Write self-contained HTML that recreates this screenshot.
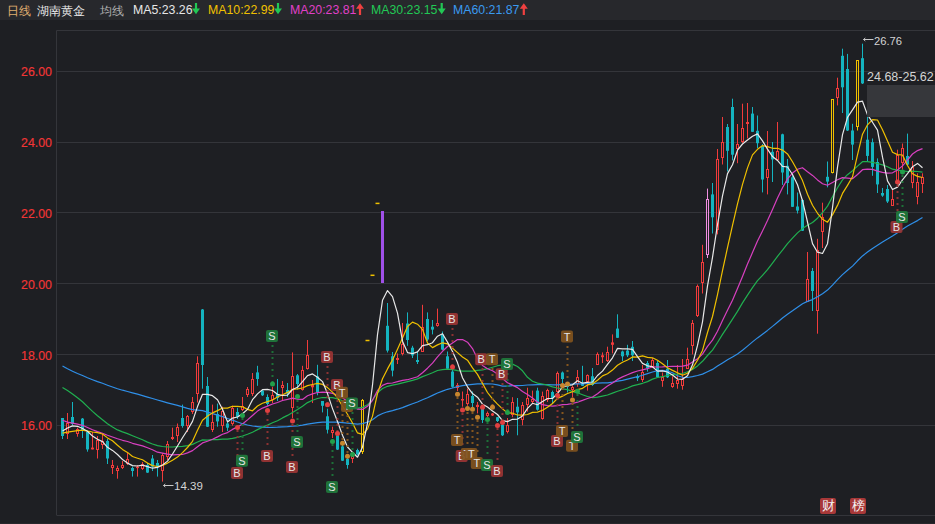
<!DOCTYPE html>
<html><head><meta charset="utf-8">
<style>
html,body{margin:0;padding:0;background:#1e1f23;width:935px;height:524px;overflow:hidden;font-family:"Liberation Sans",sans-serif;}
#hdr{position:absolute;left:0;top:0;width:935px;height:20px;background:#27282c;}
#hdr span{position:absolute;top:3px;font-size:13px;white-space:nowrap;line-height:14px;}
#hdr .sx{transform:scaleX(0.947);transform-origin:0 0;}
svg{position:absolute;left:0;top:0;}
.ax{position:absolute;left:0;width:52px;text-align:right;color:#f23636;font-size:13px;line-height:14px;transform:scaleX(0.95);transform-origin:100% 0;-webkit-text-stroke:0.15px #f23636;}
.lbl{position:absolute;color:#d4d4d4;font-size:12px;line-height:12px;white-space:nowrap;}
.badge{position:absolute;top:498px;width:16px;height:16px;background:#a83838;border-radius:2px;color:#f4f4f4;font-size:13px;line-height:16px;text-align:center;}
</style></head><body>
<div id="hdr">
<span style="left:6.5px;top:3.5px;font-size:12px;color:#e0b070">日线</span>
<span style="left:37px;top:3.5px;font-size:12px;color:#e6e6e6">湖南黄金</span>
<span style="left:99.5px;top:3.5px;font-size:12px;color:#b0b0b0">均线</span>
<span class="sx" style="left:132.6px;color:#e6e6e6">MA5:23.26</span>
<span class="sx" style="left:208px;color:#f0c000">MA10:22.99</span>
<span class="sx" style="left:289.6px;color:#e040c8">MA20:23.81</span>
<span class="sx" style="left:371.4px;color:#22c855">MA30:23.15</span>
<span class="sx" style="left:453.2px;color:#3a9af0">MA60:21.87</span>
</div>
<svg width="935" height="524" viewBox="0 0 935 524">
<g fill="#22c855"><path d="M194.9 3h2.2v5.6h2.9l-4 5.6l-4-5.6h2.9z"/><path d="M276.9 3h2.2v5.6h2.9l-4 5.6l-4-5.6h2.9z"/><path d="M440.59999999999997 3h2.2v5.6h2.9l-4 5.6l-4-5.6h2.9z"/></g>
<g fill="#f04040"><path d="M358.9 15h2.2v-6.2h2.9l-4-5.6l-4 5.6h2.9z"/><path d="M522.6999999999999 15h2.2v-6.2h2.9l-4-5.6l-4 5.6h2.9z"/></g>
<line x1="56.5" y1="30.5" x2="935" y2="30.5" stroke="#34353a" stroke-width="1"/>
<line x1="56.5" y1="30.5" x2="56.5" y2="515" stroke="#34353a" stroke-width="1"/>
<line x1="56.5" y1="515.5" x2="935" y2="515.5" stroke="#34353a" stroke-width="1"/>
<line x1="57" y1="71.5" x2="935" y2="71.5" stroke="#34353a" stroke-width="1"/>
<line x1="57" y1="142.5" x2="935" y2="142.5" stroke="#34353a" stroke-width="1"/>
<line x1="57" y1="212.5" x2="935" y2="212.5" stroke="#34353a" stroke-width="1"/>
<line x1="57" y1="283.5" x2="935" y2="283.5" stroke="#34353a" stroke-width="1"/>
<line x1="57" y1="354.5" x2="935" y2="354.5" stroke="#34353a" stroke-width="1"/>
<line x1="57" y1="425.5" x2="935" y2="425.5" stroke="#34353a" stroke-width="1"/>

<line x1="62.5" y1="418.0" x2="62.5" y2="439.0" stroke="#14b4c0" stroke-width="1"/>
<rect x="61.0" y="418.0" width="3" height="18.0" fill="#14b4c0"/>
<line x1="67.5" y1="413.0" x2="67.5" y2="423.5" stroke="#f23b3b" stroke-width="1"/>
<line x1="67.5" y1="433.5" x2="67.5" y2="439.0" stroke="#f23b3b" stroke-width="1"/>
<rect x="66.5" y="423.5" width="2" height="10.0" fill="none" stroke="#f23b3b" stroke-width="1"/>
<line x1="72.5" y1="402.0" x2="72.5" y2="425.0" stroke="#14b4c0" stroke-width="1"/>
<rect x="71.0" y="417.0" width="3" height="7.0" fill="#14b4c0"/>
<line x1="77.5" y1="427.6" x2="77.5" y2="429.5" stroke="#f23b3b" stroke-width="1"/>
<line x1="77.5" y1="433.5" x2="77.5" y2="436.7" stroke="#f23b3b" stroke-width="1"/>
<rect x="76.5" y="429.5" width="2" height="4.0" fill="none" stroke="#f23b3b" stroke-width="1"/>
<line x1="82.5" y1="418.0" x2="82.5" y2="438.0" stroke="#14b4c0" stroke-width="1"/>
<rect x="81.0" y="418.6" width="3" height="11.4" fill="#14b4c0"/>
<line x1="87.5" y1="431.0" x2="87.5" y2="451.7" stroke="#14b4c0" stroke-width="1"/>
<rect x="86.0" y="432.0" width="3" height="17.4" fill="#14b4c0"/>
<line x1="92.5" y1="432.0" x2="92.5" y2="449.4" stroke="#f23b3b" stroke-width="1"/>
<rect x="91.0" y="447.6" width="3" height="1.8" fill="#f23b3b"/>
<line x1="97.5" y1="436.0" x2="97.5" y2="440.5" stroke="#f23b3b" stroke-width="1"/>
<line x1="97.5" y1="449.5" x2="97.5" y2="458.5" stroke="#f23b3b" stroke-width="1"/>
<rect x="96.5" y="440.5" width="2" height="9.0" fill="none" stroke="#f23b3b" stroke-width="1"/>
<line x1="102.5" y1="434.0" x2="102.5" y2="441.5" stroke="#f23b3b" stroke-width="1"/>
<line x1="102.5" y1="444.5" x2="102.5" y2="449.0" stroke="#f23b3b" stroke-width="1"/>
<rect x="101.5" y="441.5" width="2" height="3.0" fill="none" stroke="#f23b3b" stroke-width="1"/>
<line x1="107.5" y1="439.0" x2="107.5" y2="464.0" stroke="#14b4c0" stroke-width="1"/>
<rect x="106.0" y="441.0" width="3" height="17.5" fill="#14b4c0"/>
<line x1="112.5" y1="460.0" x2="112.5" y2="465.5" stroke="#f23b3b" stroke-width="1"/>
<line x1="112.5" y1="467.5" x2="112.5" y2="474.0" stroke="#f23b3b" stroke-width="1"/>
<rect x="111.5" y="465.5" width="2" height="2.0" fill="none" stroke="#f23b3b" stroke-width="1"/>
<line x1="117.5" y1="465.7" x2="117.5" y2="468.5" stroke="#f23b3b" stroke-width="1"/>
<line x1="117.5" y1="470.5" x2="117.5" y2="478.7" stroke="#f23b3b" stroke-width="1"/>
<rect x="116.5" y="468.5" width="2" height="2.0" fill="none" stroke="#f23b3b" stroke-width="1"/>
<line x1="122.5" y1="461.0" x2="122.5" y2="465.5" stroke="#f23b3b" stroke-width="1"/>
<line x1="122.5" y1="467.5" x2="122.5" y2="469.0" stroke="#f23b3b" stroke-width="1"/>
<rect x="121.5" y="465.5" width="2" height="2.0" fill="none" stroke="#f23b3b" stroke-width="1"/>
<line x1="127.5" y1="453.0" x2="127.5" y2="459.5" stroke="#f23b3b" stroke-width="1"/>
<line x1="127.5" y1="463.5" x2="127.5" y2="465.0" stroke="#f23b3b" stroke-width="1"/>
<rect x="126.5" y="459.5" width="2" height="4.0" fill="none" stroke="#f23b3b" stroke-width="1"/>
<line x1="132.5" y1="466.6" x2="132.5" y2="476.6" stroke="#14b4c0" stroke-width="1"/>
<rect x="131.0" y="468.0" width="3" height="3.0" fill="#14b4c0"/>
<line x1="137.5" y1="465.0" x2="137.5" y2="476.6" stroke="#f23b3b" stroke-width="1"/>
<rect x="136.0" y="466.6" width="3" height="1.5" fill="#f23b3b"/>
<line x1="142.5" y1="462.0" x2="142.5" y2="464.5" stroke="#f23b3b" stroke-width="1"/>
<line x1="142.5" y1="468.5" x2="142.5" y2="470.0" stroke="#f23b3b" stroke-width="1"/>
<rect x="141.5" y="464.5" width="2" height="4.0" fill="none" stroke="#f23b3b" stroke-width="1"/>
<line x1="147.5" y1="463.0" x2="147.5" y2="473.0" stroke="#14b4c0" stroke-width="1"/>
<rect x="146.0" y="465.0" width="3" height="7.6" fill="#14b4c0"/>
<line x1="152.5" y1="455.0" x2="152.5" y2="471.0" stroke="#14b4c0" stroke-width="1"/>
<rect x="151.0" y="458.5" width="3" height="8.1" fill="#14b4c0"/>
<line x1="157.5" y1="460.0" x2="157.5" y2="476.6" stroke="#14b4c0" stroke-width="1"/>
<rect x="156.0" y="463.0" width="3" height="4.0" fill="#14b4c0"/>
<line x1="162.5" y1="453.0" x2="162.5" y2="455.5" stroke="#f23b3b" stroke-width="1"/>
<line x1="162.5" y1="470.5" x2="162.5" y2="481.6" stroke="#f23b3b" stroke-width="1"/>
<rect x="161.5" y="455.5" width="2" height="15.0" fill="none" stroke="#f23b3b" stroke-width="1"/>
<line x1="167.5" y1="441.0" x2="167.5" y2="444.5" stroke="#f23b3b" stroke-width="1"/>
<line x1="167.5" y1="456.5" x2="167.5" y2="460.0" stroke="#f23b3b" stroke-width="1"/>
<rect x="166.5" y="444.5" width="2" height="12.0" fill="none" stroke="#f23b3b" stroke-width="1"/>
<line x1="172.5" y1="427.7" x2="172.5" y2="440.0" stroke="#f23b3b" stroke-width="1"/>
<rect x="171.0" y="437.0" width="3" height="2.0" fill="#f23b3b"/>
<line x1="177.5" y1="423.5" x2="177.5" y2="427.5" stroke="#f23b3b" stroke-width="1"/>
<line x1="177.5" y1="435.5" x2="177.5" y2="442.0" stroke="#f23b3b" stroke-width="1"/>
<rect x="176.5" y="427.5" width="2" height="8.0" fill="none" stroke="#f23b3b" stroke-width="1"/>
<line x1="182.5" y1="404.6" x2="182.5" y2="427.7" stroke="#14b4c0" stroke-width="1"/>
<rect x="181.0" y="418.0" width="3" height="8.0" fill="#14b4c0"/>
<line x1="187.5" y1="415.0" x2="187.5" y2="416.5" stroke="#f23b3b" stroke-width="1"/>
<line x1="187.5" y1="425.5" x2="187.5" y2="432.0" stroke="#f23b3b" stroke-width="1"/>
<rect x="186.5" y="416.5" width="2" height="9.0" fill="none" stroke="#f23b3b" stroke-width="1"/>
<line x1="192.5" y1="397.0" x2="192.5" y2="402.5" stroke="#f23b3b" stroke-width="1"/>
<line x1="192.5" y1="411.5" x2="192.5" y2="414.0" stroke="#f23b3b" stroke-width="1"/>
<rect x="191.5" y="402.5" width="2" height="9.0" fill="none" stroke="#f23b3b" stroke-width="1"/>
<line x1="197.5" y1="356.3" x2="197.5" y2="363.5" stroke="#f23b3b" stroke-width="1"/>
<line x1="197.5" y1="393.5" x2="197.5" y2="402.5" stroke="#f23b3b" stroke-width="1"/>
<rect x="196.5" y="363.5" width="2" height="30.0" fill="none" stroke="#f23b3b" stroke-width="1"/>
<line x1="202.5" y1="309.0" x2="202.5" y2="388.7" stroke="#14b4c0" stroke-width="1"/>
<rect x="201.0" y="309.5" width="3" height="55.5" fill="#14b4c0"/>
<line x1="207.5" y1="377.0" x2="207.5" y2="427.0" stroke="#14b4c0" stroke-width="1"/>
<rect x="206.0" y="386.0" width="3" height="40.7" fill="#14b4c0"/>
<line x1="212.5" y1="404.6" x2="212.5" y2="422.5" stroke="#f23b3b" stroke-width="1"/>
<line x1="212.5" y1="429.5" x2="212.5" y2="432.0" stroke="#f23b3b" stroke-width="1"/>
<rect x="211.5" y="422.5" width="2" height="7.0" fill="none" stroke="#f23b3b" stroke-width="1"/>
<line x1="217.5" y1="403.6" x2="217.5" y2="426.7" stroke="#14b4c0" stroke-width="1"/>
<rect x="216.0" y="414.0" width="3" height="7.4" fill="#14b4c0"/>
<line x1="222.5" y1="406.7" x2="222.5" y2="411.5" stroke="#f23b3b" stroke-width="1"/>
<line x1="222.5" y1="425.5" x2="222.5" y2="432.0" stroke="#f23b3b" stroke-width="1"/>
<rect x="221.5" y="411.5" width="2" height="14.0" fill="none" stroke="#f23b3b" stroke-width="1"/>
<line x1="227.5" y1="420.0" x2="227.5" y2="431.0" stroke="#14b4c0" stroke-width="1"/>
<rect x="226.0" y="423.5" width="3" height="4.2" fill="#14b4c0"/>
<line x1="232.5" y1="405.7" x2="232.5" y2="408.5" stroke="#f23b3b" stroke-width="1"/>
<line x1="232.5" y1="423.5" x2="232.5" y2="425.6" stroke="#f23b3b" stroke-width="1"/>
<rect x="231.5" y="408.5" width="2" height="15.0" fill="none" stroke="#f23b3b" stroke-width="1"/>
<line x1="237.5" y1="407.8" x2="237.5" y2="419.0" stroke="#14b4c0" stroke-width="1"/>
<rect x="236.0" y="412.0" width="3" height="5.0" fill="#14b4c0"/>
<line x1="242.5" y1="397.0" x2="242.5" y2="406.5" stroke="#f23b3b" stroke-width="1"/>
<line x1="242.5" y1="409.5" x2="242.5" y2="411.0" stroke="#f23b3b" stroke-width="1"/>
<rect x="241.5" y="406.5" width="2" height="3.0" fill="none" stroke="#f23b3b" stroke-width="1"/>
<line x1="247.5" y1="387.0" x2="247.5" y2="389.5" stroke="#f23b3b" stroke-width="1"/>
<line x1="247.5" y1="394.5" x2="247.5" y2="397.0" stroke="#f23b3b" stroke-width="1"/>
<rect x="246.5" y="389.5" width="2" height="5.0" fill="none" stroke="#f23b3b" stroke-width="1"/>
<line x1="252.5" y1="373.0" x2="252.5" y2="379.5" stroke="#f23b3b" stroke-width="1"/>
<line x1="252.5" y1="393.5" x2="252.5" y2="396.0" stroke="#f23b3b" stroke-width="1"/>
<rect x="251.5" y="379.5" width="2" height="14.0" fill="none" stroke="#f23b3b" stroke-width="1"/>
<line x1="257.5" y1="365.8" x2="257.5" y2="385.8" stroke="#14b4c0" stroke-width="1"/>
<rect x="256.0" y="372.4" width="3" height="6.6" fill="#14b4c0"/>
<line x1="262.5" y1="389.6" x2="262.5" y2="396.0" stroke="#14b4c0" stroke-width="1"/>
<rect x="261.0" y="390.6" width="3" height="4.7" fill="#14b4c0"/>
<line x1="267.5" y1="394.4" x2="267.5" y2="405.8" stroke="#14b4c0" stroke-width="1"/>
<rect x="266.0" y="397.0" width="3" height="7.0" fill="#14b4c0"/>
<line x1="272.5" y1="386.8" x2="272.5" y2="395.5" stroke="#f23b3b" stroke-width="1"/>
<line x1="272.5" y1="399.5" x2="272.5" y2="403.0" stroke="#f23b3b" stroke-width="1"/>
<rect x="271.5" y="395.5" width="2" height="4.0" fill="none" stroke="#f23b3b" stroke-width="1"/>
<line x1="277.5" y1="379.0" x2="277.5" y2="401.0" stroke="#14b4c0" stroke-width="1"/>
<rect x="276.0" y="394.0" width="3" height="4.0" fill="#14b4c0"/>
<line x1="282.5" y1="381.0" x2="282.5" y2="385.5" stroke="#f23b3b" stroke-width="1"/>
<line x1="282.5" y1="387.5" x2="282.5" y2="401.0" stroke="#f23b3b" stroke-width="1"/>
<rect x="281.5" y="385.5" width="2" height="2.0" fill="none" stroke="#f23b3b" stroke-width="1"/>
<line x1="287.5" y1="383.0" x2="287.5" y2="397.0" stroke="#14b4c0" stroke-width="1"/>
<rect x="286.0" y="390.0" width="3" height="3.4" fill="#14b4c0"/>
<line x1="292.5" y1="352.4" x2="292.5" y2="376.5" stroke="#f23b3b" stroke-width="1"/>
<line x1="292.5" y1="407.5" x2="292.5" y2="418.0" stroke="#f23b3b" stroke-width="1"/>
<rect x="291.5" y="376.5" width="2" height="31.0" fill="none" stroke="#f23b3b" stroke-width="1"/>
<line x1="297.5" y1="374.0" x2="297.5" y2="389.6" stroke="#14b4c0" stroke-width="1"/>
<rect x="296.0" y="375.3" width="3" height="8.7" fill="#14b4c0"/>
<line x1="302.5" y1="365.8" x2="302.5" y2="370.5" stroke="#f23b3b" stroke-width="1"/>
<line x1="302.5" y1="389.5" x2="302.5" y2="390.6" stroke="#f23b3b" stroke-width="1"/>
<rect x="301.5" y="370.5" width="2" height="19.0" fill="none" stroke="#f23b3b" stroke-width="1"/>
<line x1="307.5" y1="340.0" x2="307.5" y2="355.5" stroke="#f23b3b" stroke-width="1"/>
<line x1="307.5" y1="368.5" x2="307.5" y2="369.6" stroke="#f23b3b" stroke-width="1"/>
<rect x="306.5" y="355.5" width="2" height="13.0" fill="none" stroke="#f23b3b" stroke-width="1"/>
<line x1="312.5" y1="380.0" x2="312.5" y2="403.0" stroke="#f23b3b" stroke-width="1"/>
<rect x="311.0" y="385.0" width="3" height="2.3" fill="#f23b3b"/>
<line x1="317.5" y1="364.8" x2="317.5" y2="395.3" stroke="#14b4c0" stroke-width="1"/>
<rect x="316.0" y="376.3" width="3" height="16.2" fill="#14b4c0"/>
<line x1="322.5" y1="401.0" x2="322.5" y2="412.4" stroke="#14b4c0" stroke-width="1"/>
<rect x="321.0" y="401.0" width="3" height="4.8" fill="#14b4c0"/>
<line x1="327.5" y1="408.7" x2="327.5" y2="433.5" stroke="#14b4c0" stroke-width="1"/>
<rect x="326.0" y="416.3" width="3" height="13.4" fill="#14b4c0"/>
<line x1="332.5" y1="426.7" x2="332.5" y2="430.5" stroke="#f23b3b" stroke-width="1"/>
<line x1="332.5" y1="432.5" x2="332.5" y2="438.0" stroke="#f23b3b" stroke-width="1"/>
<rect x="331.5" y="430.5" width="2" height="2.0" fill="none" stroke="#f23b3b" stroke-width="1"/>
<line x1="337.5" y1="433.0" x2="337.5" y2="450.0" stroke="#14b4c0" stroke-width="1"/>
<rect x="336.0" y="435.3" width="3" height="14.3" fill="#14b4c0"/>
<line x1="342.5" y1="444.0" x2="342.5" y2="461.0" stroke="#14b4c0" stroke-width="1"/>
<rect x="341.0" y="446.4" width="3" height="14.3" fill="#14b4c0"/>
<line x1="347.5" y1="455.0" x2="347.5" y2="468.7" stroke="#14b4c0" stroke-width="1"/>
<rect x="346.0" y="458.8" width="3" height="6.2" fill="#14b4c0"/>
<line x1="352.5" y1="453.4" x2="352.5" y2="456.5" stroke="#f23b3b" stroke-width="1"/>
<line x1="352.5" y1="458.5" x2="352.5" y2="463.0" stroke="#f23b3b" stroke-width="1"/>
<rect x="351.5" y="456.5" width="2" height="2.0" fill="none" stroke="#f23b3b" stroke-width="1"/>
<line x1="357.5" y1="448.7" x2="357.5" y2="455.3" stroke="#14b4c0" stroke-width="1"/>
<rect x="356.0" y="450.0" width="3" height="4.4" fill="#14b4c0"/>
<line x1="362.5" y1="399.0" x2="362.5" y2="400.5" stroke="#f0c000" stroke-width="1"/>
<line x1="362.5" y1="451.5" x2="362.5" y2="454.0" stroke="#f0c000" stroke-width="1"/>
<rect x="361.5" y="400.5" width="2" height="51.0" fill="none" stroke="#f0c000" stroke-width="1"/>
<rect x="365.5" y="339.75" width="4" height="1.5" fill="#f0c000"/>
<rect x="370.5" y="274.55" width="4" height="1.5" fill="#f0c000"/>
<rect x="375.5" y="202.65" width="4" height="1.5" fill="#f0c000"/>
<rect x="381.0" y="211.0" width="3" height="72.0" fill="#a050e8"/>
<line x1="387.5" y1="303.0" x2="387.5" y2="352.5" stroke="#14b4c0" stroke-width="1"/>
<rect x="386.0" y="325.8" width="3" height="24.8" fill="#14b4c0"/>
<line x1="392.5" y1="352.0" x2="392.5" y2="376.4" stroke="#14b4c0" stroke-width="1"/>
<rect x="391.0" y="356.3" width="3" height="14.3" fill="#14b4c0"/>
<line x1="397.5" y1="353.5" x2="397.5" y2="358.5" stroke="#f23b3b" stroke-width="1"/>
<line x1="397.5" y1="359.5" x2="397.5" y2="364.0" stroke="#f23b3b" stroke-width="1"/>
<rect x="396.5" y="358.5" width="2" height="1.0" fill="none" stroke="#f23b3b" stroke-width="1"/>
<line x1="402.5" y1="323.0" x2="402.5" y2="344.5" stroke="#f23b3b" stroke-width="1"/>
<line x1="402.5" y1="353.5" x2="402.5" y2="355.4" stroke="#f23b3b" stroke-width="1"/>
<rect x="401.5" y="344.5" width="2" height="9.0" fill="none" stroke="#f23b3b" stroke-width="1"/>
<line x1="407.5" y1="312.4" x2="407.5" y2="345.8" stroke="#14b4c0" stroke-width="1"/>
<rect x="406.0" y="323.5" width="3" height="16.5" fill="#14b4c0"/>
<line x1="412.5" y1="345.8" x2="412.5" y2="358.0" stroke="#14b4c0" stroke-width="1"/>
<rect x="411.0" y="347.7" width="3" height="7.7" fill="#14b4c0"/>
<line x1="417.5" y1="351.6" x2="417.5" y2="364.0" stroke="#14b4c0" stroke-width="1"/>
<rect x="416.0" y="360.0" width="3" height="2.0" fill="#14b4c0"/>
<line x1="422.5" y1="304.8" x2="422.5" y2="327.5" stroke="#f23b3b" stroke-width="1"/>
<line x1="422.5" y1="351.5" x2="422.5" y2="352.0" stroke="#f23b3b" stroke-width="1"/>
<rect x="421.5" y="327.5" width="2" height="24.0" fill="none" stroke="#f23b3b" stroke-width="1"/>
<line x1="427.5" y1="312.4" x2="427.5" y2="341.0" stroke="#14b4c0" stroke-width="1"/>
<rect x="426.0" y="319.0" width="3" height="20.5" fill="#14b4c0"/>
<line x1="432.5" y1="320.0" x2="432.5" y2="334.4" stroke="#14b4c0" stroke-width="1"/>
<rect x="431.0" y="326.7" width="3" height="2.9" fill="#14b4c0"/>
<line x1="437.5" y1="308.6" x2="437.5" y2="323.5" stroke="#f23b3b" stroke-width="1"/>
<line x1="437.5" y1="325.5" x2="437.5" y2="326.7" stroke="#f23b3b" stroke-width="1"/>
<rect x="436.5" y="323.5" width="2" height="2.0" fill="none" stroke="#f23b3b" stroke-width="1"/>
<line x1="442.5" y1="331.5" x2="442.5" y2="350.0" stroke="#14b4c0" stroke-width="1"/>
<rect x="441.0" y="334.4" width="3" height="15.2" fill="#14b4c0"/>
<line x1="447.5" y1="351.5" x2="447.5" y2="369.7" stroke="#14b4c0" stroke-width="1"/>
<rect x="446.0" y="356.3" width="3" height="12.4" fill="#14b4c0"/>
<line x1="452.5" y1="369.7" x2="452.5" y2="387.8" stroke="#14b4c0" stroke-width="1"/>
<rect x="451.0" y="371.6" width="3" height="15.2" fill="#14b4c0"/>
<line x1="457.5" y1="383.0" x2="457.5" y2="385.5" stroke="#f23b3b" stroke-width="1"/>
<line x1="457.5" y1="387.5" x2="457.5" y2="391.0" stroke="#f23b3b" stroke-width="1"/>
<rect x="456.5" y="385.5" width="2" height="2.0" fill="none" stroke="#f23b3b" stroke-width="1"/>
<line x1="462.5" y1="391.5" x2="462.5" y2="406.7" stroke="#f23b3b" stroke-width="1"/>
<rect x="461.0" y="399.0" width="3" height="1.5" fill="#f23b3b"/>
<line x1="467.5" y1="388.6" x2="467.5" y2="394.5" stroke="#f23b3b" stroke-width="1"/>
<line x1="467.5" y1="403.5" x2="467.5" y2="405.8" stroke="#f23b3b" stroke-width="1"/>
<rect x="466.5" y="394.5" width="2" height="9.0" fill="none" stroke="#f23b3b" stroke-width="1"/>
<line x1="472.5" y1="391.5" x2="472.5" y2="407.7" stroke="#14b4c0" stroke-width="1"/>
<rect x="471.0" y="396.0" width="3" height="7.0" fill="#14b4c0"/>
<line x1="477.5" y1="402.0" x2="477.5" y2="413.4" stroke="#f23b3b" stroke-width="1"/>
<rect x="476.0" y="404.8" width="3" height="2.2" fill="#f23b3b"/>
<line x1="482.5" y1="405.8" x2="482.5" y2="423.0" stroke="#14b4c0" stroke-width="1"/>
<rect x="481.0" y="408.6" width="3" height="11.4" fill="#14b4c0"/>
<line x1="487.5" y1="411.5" x2="487.5" y2="413.5" stroke="#f23b3b" stroke-width="1"/>
<line x1="487.5" y1="415.5" x2="487.5" y2="417.2" stroke="#f23b3b" stroke-width="1"/>
<rect x="486.5" y="413.5" width="2" height="2.0" fill="none" stroke="#f23b3b" stroke-width="1"/>
<line x1="492.5" y1="413.0" x2="492.5" y2="416.0" stroke="#f23b3b" stroke-width="1"/>
<rect x="491.0" y="413.5" width="3" height="2.0" fill="#f23b3b"/>
<line x1="497.5" y1="417.0" x2="497.5" y2="422.0" stroke="#14b4c0" stroke-width="1"/>
<rect x="496.0" y="417.2" width="3" height="3.8" fill="#14b4c0"/>
<line x1="502.5" y1="422.0" x2="502.5" y2="436.0" stroke="#14b4c0" stroke-width="1"/>
<rect x="501.0" y="424.8" width="3" height="10.5" fill="#14b4c0"/>
<line x1="507.5" y1="418.0" x2="507.5" y2="425.5" stroke="#f23b3b" stroke-width="1"/>
<line x1="507.5" y1="431.5" x2="507.5" y2="433.4" stroke="#f23b3b" stroke-width="1"/>
<rect x="506.5" y="425.5" width="2" height="6.0" fill="none" stroke="#f23b3b" stroke-width="1"/>
<line x1="512.5" y1="397.2" x2="512.5" y2="402.5" stroke="#f23b3b" stroke-width="1"/>
<line x1="512.5" y1="414.5" x2="512.5" y2="417.2" stroke="#f23b3b" stroke-width="1"/>
<rect x="511.5" y="402.5" width="2" height="12.0" fill="none" stroke="#f23b3b" stroke-width="1"/>
<line x1="517.5" y1="398.0" x2="517.5" y2="435.3" stroke="#14b4c0" stroke-width="1"/>
<rect x="516.0" y="406.7" width="3" height="5.7" fill="#14b4c0"/>
<line x1="522.5" y1="402.0" x2="522.5" y2="405.5" stroke="#f23b3b" stroke-width="1"/>
<line x1="522.5" y1="419.5" x2="522.5" y2="425.3" stroke="#f23b3b" stroke-width="1"/>
<rect x="521.5" y="405.5" width="2" height="14.0" fill="none" stroke="#f23b3b" stroke-width="1"/>
<line x1="527.5" y1="387.7" x2="527.5" y2="398.5" stroke="#f23b3b" stroke-width="1"/>
<line x1="527.5" y1="404.5" x2="527.5" y2="411.6" stroke="#f23b3b" stroke-width="1"/>
<rect x="526.5" y="398.5" width="2" height="6.0" fill="none" stroke="#f23b3b" stroke-width="1"/>
<line x1="532.5" y1="390.6" x2="532.5" y2="399.5" stroke="#f23b3b" stroke-width="1"/>
<line x1="532.5" y1="401.5" x2="532.5" y2="404.0" stroke="#f23b3b" stroke-width="1"/>
<rect x="531.5" y="399.5" width="2" height="2.0" fill="none" stroke="#f23b3b" stroke-width="1"/>
<line x1="537.5" y1="387.7" x2="537.5" y2="410.6" stroke="#14b4c0" stroke-width="1"/>
<rect x="536.0" y="390.6" width="3" height="19.1" fill="#14b4c0"/>
<line x1="542.5" y1="391.6" x2="542.5" y2="396.5" stroke="#f23b3b" stroke-width="1"/>
<line x1="542.5" y1="418.5" x2="542.5" y2="419.6" stroke="#f23b3b" stroke-width="1"/>
<rect x="541.5" y="396.5" width="2" height="22.0" fill="none" stroke="#f23b3b" stroke-width="1"/>
<line x1="547.5" y1="388.7" x2="547.5" y2="390.5" stroke="#f23b3b" stroke-width="1"/>
<line x1="547.5" y1="399.5" x2="547.5" y2="402.0" stroke="#f23b3b" stroke-width="1"/>
<rect x="546.5" y="390.5" width="2" height="9.0" fill="none" stroke="#f23b3b" stroke-width="1"/>
<line x1="552.5" y1="390.6" x2="552.5" y2="404.0" stroke="#14b4c0" stroke-width="1"/>
<rect x="551.0" y="392.0" width="3" height="6.0" fill="#14b4c0"/>
<line x1="557.5" y1="371.5" x2="557.5" y2="373.5" stroke="#f23b3b" stroke-width="1"/>
<line x1="557.5" y1="391.5" x2="557.5" y2="392.0" stroke="#f23b3b" stroke-width="1"/>
<rect x="556.5" y="373.5" width="2" height="18.0" fill="none" stroke="#f23b3b" stroke-width="1"/>
<line x1="562.5" y1="371.5" x2="562.5" y2="386.8" stroke="#14b4c0" stroke-width="1"/>
<rect x="561.0" y="372.5" width="3" height="6.5" fill="#14b4c0"/>
<line x1="567.5" y1="383.0" x2="567.5" y2="392.5" stroke="#14b4c0" stroke-width="1"/>
<rect x="566.0" y="384.0" width="3" height="3.0" fill="#14b4c0"/>
<line x1="572.5" y1="385.8" x2="572.5" y2="387.5" stroke="#f23b3b" stroke-width="1"/>
<line x1="572.5" y1="389.5" x2="572.5" y2="397.3" stroke="#f23b3b" stroke-width="1"/>
<rect x="571.5" y="387.5" width="2" height="2.0" fill="none" stroke="#f23b3b" stroke-width="1"/>
<line x1="577.5" y1="370.0" x2="577.5" y2="377.5" stroke="#f23b3b" stroke-width="1"/>
<line x1="577.5" y1="383.5" x2="577.5" y2="386.8" stroke="#f23b3b" stroke-width="1"/>
<rect x="576.5" y="377.5" width="2" height="6.0" fill="none" stroke="#f23b3b" stroke-width="1"/>
<line x1="582.5" y1="365.8" x2="582.5" y2="386.0" stroke="#14b4c0" stroke-width="1"/>
<rect x="581.0" y="383.0" width="3" height="2.8" fill="#14b4c0"/>
<line x1="587.5" y1="374.4" x2="587.5" y2="375.5" stroke="#f23b3b" stroke-width="1"/>
<line x1="587.5" y1="381.5" x2="587.5" y2="390.6" stroke="#f23b3b" stroke-width="1"/>
<rect x="586.5" y="375.5" width="2" height="6.0" fill="none" stroke="#f23b3b" stroke-width="1"/>
<line x1="592.5" y1="368.0" x2="592.5" y2="385.8" stroke="#14b4c0" stroke-width="1"/>
<rect x="591.0" y="376.3" width="3" height="8.7" fill="#14b4c0"/>
<line x1="597.5" y1="352.4" x2="597.5" y2="354.5" stroke="#f23b3b" stroke-width="1"/>
<line x1="597.5" y1="364.5" x2="597.5" y2="365.0" stroke="#f23b3b" stroke-width="1"/>
<rect x="596.5" y="354.5" width="2" height="10.0" fill="none" stroke="#f23b3b" stroke-width="1"/>
<line x1="602.5" y1="352.4" x2="602.5" y2="363.0" stroke="#f23b3b" stroke-width="1"/>
<rect x="601.0" y="355.3" width="3" height="1.9" fill="#f23b3b"/>
<line x1="607.5" y1="346.7" x2="607.5" y2="352.5" stroke="#f23b3b" stroke-width="1"/>
<line x1="607.5" y1="360.5" x2="607.5" y2="362.0" stroke="#f23b3b" stroke-width="1"/>
<rect x="606.5" y="352.5" width="2" height="8.0" fill="none" stroke="#f23b3b" stroke-width="1"/>
<line x1="612.5" y1="334.4" x2="612.5" y2="353.4" stroke="#f23b3b" stroke-width="1"/>
<rect x="611.0" y="342.4" width="3" height="2.4" fill="#f23b3b"/>
<line x1="617.5" y1="314.3" x2="617.5" y2="338.0" stroke="#14b4c0" stroke-width="1"/>
<rect x="616.0" y="328.6" width="3" height="9.2" fill="#14b4c0"/>
<line x1="622.5" y1="350.6" x2="622.5" y2="361.0" stroke="#14b4c0" stroke-width="1"/>
<rect x="621.0" y="351.5" width="3" height="4.8" fill="#14b4c0"/>
<line x1="627.5" y1="344.8" x2="627.5" y2="357.0" stroke="#14b4c0" stroke-width="1"/>
<rect x="626.0" y="350.6" width="3" height="4.7" fill="#14b4c0"/>
<line x1="632.5" y1="341.0" x2="632.5" y2="361.0" stroke="#14b4c0" stroke-width="1"/>
<rect x="631.0" y="346.8" width="3" height="8.5" fill="#14b4c0"/>
<line x1="637.5" y1="374.4" x2="637.5" y2="381.0" stroke="#14b4c0" stroke-width="1"/>
<rect x="636.0" y="376.3" width="3" height="1.9" fill="#14b4c0"/>
<line x1="642.5" y1="365.0" x2="642.5" y2="372.5" stroke="#f23b3b" stroke-width="1"/>
<line x1="642.5" y1="379.5" x2="642.5" y2="382.0" stroke="#f23b3b" stroke-width="1"/>
<rect x="641.5" y="372.5" width="2" height="7.0" fill="none" stroke="#f23b3b" stroke-width="1"/>
<line x1="647.5" y1="361.0" x2="647.5" y2="371.6" stroke="#14b4c0" stroke-width="1"/>
<rect x="646.0" y="363.0" width="3" height="5.0" fill="#14b4c0"/>
<line x1="652.5" y1="358.0" x2="652.5" y2="360.5" stroke="#f23b3b" stroke-width="1"/>
<line x1="652.5" y1="367.5" x2="652.5" y2="368.0" stroke="#f23b3b" stroke-width="1"/>
<rect x="651.5" y="360.5" width="2" height="7.0" fill="none" stroke="#f23b3b" stroke-width="1"/>
<line x1="657.5" y1="361.0" x2="657.5" y2="378.0" stroke="#14b4c0" stroke-width="1"/>
<rect x="656.0" y="363.0" width="3" height="14.3" fill="#14b4c0"/>
<line x1="662.5" y1="372.5" x2="662.5" y2="377.5" stroke="#f23b3b" stroke-width="1"/>
<line x1="662.5" y1="380.5" x2="662.5" y2="386.8" stroke="#f23b3b" stroke-width="1"/>
<rect x="661.5" y="377.5" width="2" height="3.0" fill="none" stroke="#f23b3b" stroke-width="1"/>
<line x1="667.5" y1="360.0" x2="667.5" y2="378.0" stroke="#14b4c0" stroke-width="1"/>
<rect x="666.0" y="368.7" width="3" height="8.6" fill="#14b4c0"/>
<line x1="672.5" y1="376.3" x2="672.5" y2="383.5" stroke="#f23b3b" stroke-width="1"/>
<line x1="672.5" y1="386.5" x2="672.5" y2="387.8" stroke="#f23b3b" stroke-width="1"/>
<rect x="671.5" y="383.5" width="2" height="3.0" fill="none" stroke="#f23b3b" stroke-width="1"/>
<line x1="677.5" y1="365.0" x2="677.5" y2="380.5" stroke="#f23b3b" stroke-width="1"/>
<line x1="677.5" y1="383.5" x2="677.5" y2="388.7" stroke="#f23b3b" stroke-width="1"/>
<rect x="676.5" y="380.5" width="2" height="3.0" fill="none" stroke="#f23b3b" stroke-width="1"/>
<line x1="682.5" y1="359.0" x2="682.5" y2="379.5" stroke="#f23b3b" stroke-width="1"/>
<line x1="682.5" y1="385.5" x2="682.5" y2="389.7" stroke="#f23b3b" stroke-width="1"/>
<rect x="681.5" y="379.5" width="2" height="6.0" fill="none" stroke="#f23b3b" stroke-width="1"/>
<line x1="687.5" y1="347.7" x2="687.5" y2="359.5" stroke="#f23b3b" stroke-width="1"/>
<line x1="687.5" y1="368.5" x2="687.5" y2="369.0" stroke="#f23b3b" stroke-width="1"/>
<rect x="686.5" y="359.5" width="2" height="9.0" fill="none" stroke="#f23b3b" stroke-width="1"/>
<line x1="692.5" y1="320.0" x2="692.5" y2="323.5" stroke="#f23b3b" stroke-width="1"/>
<line x1="692.5" y1="345.5" x2="692.5" y2="354.4" stroke="#f23b3b" stroke-width="1"/>
<rect x="691.5" y="323.5" width="2" height="22.0" fill="none" stroke="#f23b3b" stroke-width="1"/>
<line x1="697.5" y1="284.5" x2="697.5" y2="286.5" stroke="#f23b3b" stroke-width="1"/>
<line x1="697.5" y1="315.5" x2="697.5" y2="317.0" stroke="#f23b3b" stroke-width="1"/>
<rect x="696.5" y="286.5" width="2" height="29.0" fill="none" stroke="#f23b3b" stroke-width="1"/>
<line x1="702.5" y1="244.8" x2="702.5" y2="262.5" stroke="#f23b3b" stroke-width="1"/>
<line x1="702.5" y1="282.5" x2="702.5" y2="293.5" stroke="#f23b3b" stroke-width="1"/>
<rect x="701.5" y="262.5" width="2" height="20.0" fill="none" stroke="#f23b3b" stroke-width="1"/>
<line x1="707.5" y1="188.6" x2="707.5" y2="199.5" stroke="#f08ee0" stroke-width="1"/>
<line x1="707.5" y1="254.5" x2="707.5" y2="258.0" stroke="#f08ee0" stroke-width="1"/>
<rect x="706.5" y="199.5" width="2" height="55.0" fill="none" stroke="#f08ee0" stroke-width="1"/>
<line x1="712.5" y1="183.0" x2="712.5" y2="233.5" stroke="#14b4c0" stroke-width="1"/>
<rect x="711.0" y="194.4" width="3" height="22.9" fill="#14b4c0"/>
<line x1="717.5" y1="149.0" x2="717.5" y2="159.5" stroke="#f23b3b" stroke-width="1"/>
<line x1="717.5" y1="229.5" x2="717.5" y2="234.4" stroke="#f23b3b" stroke-width="1"/>
<rect x="716.5" y="159.5" width="2" height="70.0" fill="none" stroke="#f23b3b" stroke-width="1"/>
<line x1="722.5" y1="117.0" x2="722.5" y2="142.5" stroke="#f23b3b" stroke-width="1"/>
<line x1="722.5" y1="157.5" x2="722.5" y2="164.5" stroke="#f23b3b" stroke-width="1"/>
<rect x="721.5" y="142.5" width="2" height="15.0" fill="none" stroke="#f23b3b" stroke-width="1"/>
<line x1="727.5" y1="124.0" x2="727.5" y2="171.5" stroke="#14b4c0" stroke-width="1"/>
<rect x="726.0" y="127.0" width="3" height="23.8" fill="#14b4c0"/>
<line x1="732.5" y1="98.7" x2="732.5" y2="160.4" stroke="#14b4c0" stroke-width="1"/>
<rect x="731.0" y="107.0" width="3" height="47.7" fill="#14b4c0"/>
<line x1="737.5" y1="124.0" x2="737.5" y2="144.5" stroke="#f23b3b" stroke-width="1"/>
<line x1="737.5" y1="148.5" x2="737.5" y2="163.2" stroke="#f23b3b" stroke-width="1"/>
<rect x="736.5" y="144.5" width="2" height="4.0" fill="none" stroke="#f23b3b" stroke-width="1"/>
<line x1="742.5" y1="103.7" x2="742.5" y2="128.5" stroke="#f23b3b" stroke-width="1"/>
<line x1="742.5" y1="141.5" x2="742.5" y2="143.0" stroke="#f23b3b" stroke-width="1"/>
<rect x="741.5" y="128.5" width="2" height="13.0" fill="none" stroke="#f23b3b" stroke-width="1"/>
<line x1="747.5" y1="103.0" x2="747.5" y2="138.4" stroke="#f23b3b" stroke-width="1"/>
<rect x="746.0" y="122.0" width="3" height="2.0" fill="#f23b3b"/>
<line x1="752.5" y1="107.0" x2="752.5" y2="132.0" stroke="#14b4c0" stroke-width="1"/>
<rect x="751.0" y="113.6" width="3" height="18.2" fill="#14b4c0"/>
<line x1="757.5" y1="115.5" x2="757.5" y2="148.0" stroke="#14b4c0" stroke-width="1"/>
<rect x="756.0" y="130.8" width="3" height="12.4" fill="#14b4c0"/>
<line x1="762.5" y1="144.0" x2="762.5" y2="192.4" stroke="#14b4c0" stroke-width="1"/>
<rect x="761.0" y="146.0" width="3" height="33.5" fill="#14b4c0"/>
<line x1="767.5" y1="131.0" x2="767.5" y2="169.5" stroke="#f23b3b" stroke-width="1"/>
<line x1="767.5" y1="177.5" x2="767.5" y2="194.4" stroke="#f23b3b" stroke-width="1"/>
<rect x="766.5" y="169.5" width="2" height="8.0" fill="none" stroke="#f23b3b" stroke-width="1"/>
<line x1="772.5" y1="142.0" x2="772.5" y2="182.0" stroke="#14b4c0" stroke-width="1"/>
<rect x="771.0" y="151.8" width="3" height="7.6" fill="#14b4c0"/>
<line x1="777.5" y1="122.0" x2="777.5" y2="151.5" stroke="#f23b3b" stroke-width="1"/>
<line x1="777.5" y1="159.5" x2="777.5" y2="160.0" stroke="#f23b3b" stroke-width="1"/>
<rect x="776.5" y="151.5" width="2" height="8.0" fill="none" stroke="#f23b3b" stroke-width="1"/>
<line x1="782.5" y1="133.7" x2="782.5" y2="184.9" stroke="#14b4c0" stroke-width="1"/>
<rect x="781.0" y="134.3" width="3" height="38.2" fill="#14b4c0"/>
<line x1="787.5" y1="159.0" x2="787.5" y2="194.4" stroke="#14b4c0" stroke-width="1"/>
<rect x="786.0" y="165.8" width="3" height="17.2" fill="#14b4c0"/>
<line x1="792.5" y1="175.3" x2="792.5" y2="207.0" stroke="#14b4c0" stroke-width="1"/>
<rect x="791.0" y="177.3" width="3" height="29.5" fill="#14b4c0"/>
<line x1="797.5" y1="192.5" x2="797.5" y2="213.5" stroke="#14b4c0" stroke-width="1"/>
<rect x="796.0" y="206.5" width="3" height="4.1" fill="#14b4c0"/>
<line x1="802.5" y1="199.2" x2="802.5" y2="231.0" stroke="#14b4c0" stroke-width="1"/>
<rect x="801.0" y="200.0" width="3" height="30.7" fill="#14b4c0"/>
<line x1="807.5" y1="252.0" x2="807.5" y2="279.5" stroke="#f23b3b" stroke-width="1"/>
<line x1="807.5" y1="301.5" x2="807.5" y2="302.0" stroke="#f23b3b" stroke-width="1"/>
<rect x="806.5" y="279.5" width="2" height="22.0" fill="none" stroke="#f23b3b" stroke-width="1"/>
<line x1="812.5" y1="268.0" x2="812.5" y2="311.0" stroke="#14b4c0" stroke-width="1"/>
<rect x="811.0" y="271.0" width="3" height="20.0" fill="#14b4c0"/>
<line x1="817.5" y1="238.8" x2="817.5" y2="250.5" stroke="#f23b3b" stroke-width="1"/>
<line x1="817.5" y1="310.5" x2="817.5" y2="333.7" stroke="#f23b3b" stroke-width="1"/>
<rect x="816.5" y="250.5" width="2" height="60.0" fill="none" stroke="#f23b3b" stroke-width="1"/>
<line x1="822.5" y1="202.7" x2="822.5" y2="217.5" stroke="#f23b3b" stroke-width="1"/>
<line x1="822.5" y1="231.5" x2="822.5" y2="248.0" stroke="#f23b3b" stroke-width="1"/>
<rect x="821.5" y="217.5" width="2" height="14.0" fill="none" stroke="#f23b3b" stroke-width="1"/>
<line x1="827.5" y1="161.5" x2="827.5" y2="187.3" stroke="#14b4c0" stroke-width="1"/>
<rect x="826.0" y="176.8" width="3" height="4.8" fill="#14b4c0"/>
<line x1="832.5" y1="99.0" x2="832.5" y2="99.5" stroke="#f0c000" stroke-width="1"/>
<line x1="832.5" y1="172.5" x2="832.5" y2="173.4" stroke="#f0c000" stroke-width="1"/>
<rect x="831.5" y="99.5" width="2" height="73.0" fill="none" stroke="#f0c000" stroke-width="1"/>
<line x1="837.5" y1="77.7" x2="837.5" y2="88.5" stroke="#f23b3b" stroke-width="1"/>
<line x1="837.5" y1="97.5" x2="837.5" y2="105.4" stroke="#f23b3b" stroke-width="1"/>
<rect x="836.5" y="88.5" width="2" height="9.0" fill="none" stroke="#f23b3b" stroke-width="1"/>
<line x1="842.5" y1="48.7" x2="842.5" y2="113.0" stroke="#14b4c0" stroke-width="1"/>
<rect x="841.0" y="55.8" width="3" height="31.5" fill="#14b4c0"/>
<line x1="847.5" y1="53.9" x2="847.5" y2="131.0" stroke="#14b4c0" stroke-width="1"/>
<rect x="846.0" y="69.0" width="3" height="61.5" fill="#14b4c0"/>
<line x1="852.5" y1="123.8" x2="852.5" y2="160.0" stroke="#14b4c0" stroke-width="1"/>
<rect x="851.0" y="130.5" width="3" height="14.1" fill="#14b4c0"/>
<line x1="857.5" y1="60.0" x2="857.5" y2="60.5" stroke="#f0c000" stroke-width="1"/>
<line x1="857.5" y1="126.5" x2="857.5" y2="130.5" stroke="#f0c000" stroke-width="1"/>
<rect x="856.5" y="60.5" width="2" height="66.0" fill="none" stroke="#f0c000" stroke-width="1"/>
<line x1="862.5" y1="43.7" x2="862.5" y2="84.0" stroke="#14b4c0" stroke-width="1"/>
<rect x="861.0" y="58.2" width="3" height="25.2" fill="#14b4c0"/>
<line x1="867.5" y1="116.2" x2="867.5" y2="162.0" stroke="#14b4c0" stroke-width="1"/>
<rect x="866.0" y="139.7" width="3" height="16.2" fill="#14b4c0"/>
<line x1="872.5" y1="138.5" x2="872.5" y2="175.8" stroke="#14b4c0" stroke-width="1"/>
<rect x="871.0" y="142.2" width="3" height="24.7" fill="#14b4c0"/>
<line x1="877.5" y1="158.4" x2="877.5" y2="193.0" stroke="#14b4c0" stroke-width="1"/>
<rect x="876.0" y="162.0" width="3" height="22.4" fill="#14b4c0"/>
<line x1="882.5" y1="188.0" x2="882.5" y2="196.8" stroke="#14b4c0" stroke-width="1"/>
<rect x="881.0" y="193.0" width="3" height="2.6" fill="#14b4c0"/>
<line x1="887.5" y1="185.0" x2="887.5" y2="203.0" stroke="#14b4c0" stroke-width="1"/>
<rect x="886.0" y="189.0" width="3" height="12.5" fill="#14b4c0"/>
<line x1="892.5" y1="189.4" x2="892.5" y2="199.5" stroke="#f23b3b" stroke-width="1"/>
<line x1="892.5" y1="205.5" x2="892.5" y2="206.0" stroke="#f23b3b" stroke-width="1"/>
<rect x="891.5" y="199.5" width="2" height="6.0" fill="none" stroke="#f23b3b" stroke-width="1"/>
<line x1="897.5" y1="149.7" x2="897.5" y2="155.5" stroke="#f23b3b" stroke-width="1"/>
<line x1="897.5" y1="180.5" x2="897.5" y2="184.4" stroke="#f23b3b" stroke-width="1"/>
<rect x="896.5" y="155.5" width="2" height="25.0" fill="none" stroke="#f23b3b" stroke-width="1"/>
<line x1="902.5" y1="143.5" x2="902.5" y2="148.5" stroke="#f23b3b" stroke-width="1"/>
<line x1="902.5" y1="162.5" x2="902.5" y2="169.6" stroke="#f23b3b" stroke-width="1"/>
<rect x="901.5" y="148.5" width="2" height="14.0" fill="none" stroke="#f23b3b" stroke-width="1"/>
<line x1="907.5" y1="133.6" x2="907.5" y2="165.0" stroke="#14b4c0" stroke-width="1"/>
<rect x="906.0" y="156.0" width="3" height="8.6" fill="#14b4c0"/>
<line x1="912.5" y1="161.0" x2="912.5" y2="167.5" stroke="#f23b3b" stroke-width="1"/>
<line x1="912.5" y1="182.5" x2="912.5" y2="188.2" stroke="#f23b3b" stroke-width="1"/>
<rect x="911.5" y="167.5" width="2" height="15.0" fill="none" stroke="#f23b3b" stroke-width="1"/>
<line x1="917.5" y1="173.3" x2="917.5" y2="182.5" stroke="#f23b3b" stroke-width="1"/>
<line x1="917.5" y1="196.5" x2="917.5" y2="204.3" stroke="#f23b3b" stroke-width="1"/>
<rect x="916.5" y="182.5" width="2" height="14.0" fill="none" stroke="#f23b3b" stroke-width="1"/>
<line x1="922.5" y1="173.3" x2="922.5" y2="177.5" stroke="#f23b3b" stroke-width="1"/>
<line x1="922.5" y1="183.5" x2="922.5" y2="193.0" stroke="#f23b3b" stroke-width="1"/>
<rect x="921.5" y="177.5" width="2" height="6.0" fill="none" stroke="#f23b3b" stroke-width="1"/>
<path d="M62.5 366.0 L67.5 368.8 L72.5 371.2 L77.5 373.5 L82.5 375.5 L87.5 377.7 L92.5 379.7 L97.5 381.6 L102.5 383.3 L107.5 385.2 L112.5 387.0 L117.5 388.7 L122.5 390.2 L127.5 391.5 L132.5 392.9 L137.5 394.2 L142.5 395.6 L147.5 397.1 L152.5 398.5 L157.5 400.0 L162.5 401.4 L167.5 402.8 L172.5 404.1 L177.5 405.4 L182.5 406.9 L187.5 408.4 L192.5 409.6 L197.5 410.2 L202.5 410.7 L207.5 412.1 L212.5 413.6 L217.5 415.1 L222.5 416.6 L227.5 418.5 L232.5 420.1 L237.5 422.0 L242.5 423.7 L247.5 425.0 L252.5 426.0 L257.5 426.6 L262.5 427.2 L267.5 427.5 L272.5 427.3 L277.5 427.2 L282.5 426.8 L287.5 426.6 L292.5 426.1 L297.5 425.8 L302.5 425.2 L307.5 424.1 L312.5 423.4 L317.5 422.7 L322.5 422.2 L327.5 422.1 L332.5 422.0 L337.5 422.2 L342.5 422.6 L347.5 423.1 L352.5 423.6 L357.5 424.2 L362.5 423.6 L367.5 422.2 L372.5 419.7 L377.5 415.9 L382.5 413.5 L387.5 411.8 L392.5 410.6 L397.5 409.2 L402.5 407.6 L407.5 405.6 L412.5 403.8 L417.5 402.0 L422.5 399.7 L427.5 397.7 L432.5 395.4 L437.5 393.0 L442.5 391.1 L447.5 389.3 L452.5 388.0 L457.5 386.6 L462.5 385.7 L467.5 384.9 L472.5 384.3 L477.5 383.9 L482.5 383.8 L487.5 383.8 L492.5 384.0 L497.5 384.9 L502.5 386.1 L507.5 386.1 L512.5 385.7 L517.5 385.6 L522.5 385.5 L527.5 385.0 L532.5 384.9 L537.5 384.7 L542.5 384.6 L547.5 384.6 L552.5 384.9 L557.5 384.8 L562.5 384.5 L567.5 384.3 L572.5 384.1 L577.5 383.8 L582.5 383.8 L587.5 383.5 L592.5 383.6 L597.5 383.1 L602.5 382.9 L607.5 382.8 L612.5 382.1 L617.5 381.2 L622.5 380.4 L627.5 379.2 L632.5 377.9 L637.5 376.7 L642.5 375.2 L647.5 373.6 L652.5 372.0 L657.5 370.7 L662.5 370.4 L667.5 371.0 L672.5 372.8 L677.5 375.7 L682.5 377.3 L687.5 377.5 L692.5 376.7 L697.5 375.5 L702.5 374.1 L707.5 371.7 L712.5 369.4 L717.5 366.1 L722.5 363.0 L727.5 359.8 L732.5 356.9 L737.5 353.9 L742.5 350.3 L747.5 346.1 L752.5 341.9 L757.5 337.9 L762.5 334.2 L767.5 330.4 L772.5 326.4 L777.5 322.2 L782.5 318.0 L787.5 314.2 L792.5 310.8 L797.5 307.2 L802.5 303.8 L807.5 301.4 L812.5 299.6 L817.5 296.8 L822.5 293.7 L827.5 290.1 L832.5 285.1 L837.5 279.7 L842.5 274.6 L847.5 270.3 L852.5 266.1 L857.5 260.8 L862.5 255.9 L867.5 252.1 L872.5 248.4 L877.5 245.2 L882.5 242.0 L887.5 239.1 L892.5 236.0 L897.5 232.7 L902.5 229.2 L907.5 226.1 L912.5 223.2 L917.5 220.6 L922.5 217.6" fill="none" stroke="#2f8fe8" stroke-width="1.2" stroke-linejoin="round"/>
<path d="M62.5 387.5 L67.5 390.6 L72.5 394.0 L77.5 397.8 L82.5 401.8 L87.5 406.6 L92.5 411.4 L97.5 415.8 L102.5 419.8 L107.5 423.7 L112.5 427.1 L117.5 429.9 L122.5 431.9 L127.5 433.6 L132.5 435.7 L137.5 437.7 L142.5 439.8 L147.5 442.1 L152.5 444.0 L157.5 445.6 L162.5 446.5 L167.5 446.9 L172.5 447.0 L177.5 446.7 L182.5 446.4 L187.5 445.6 L192.5 444.4 L197.5 442.0 L202.5 439.9 L207.5 440.2 L212.5 439.7 L217.5 439.7 L222.5 439.2 L227.5 439.2 L232.5 438.4 L237.5 437.4 L242.5 436.0 L247.5 434.3 L252.5 432.2 L257.5 429.6 L262.5 427.2 L267.5 425.1 L272.5 422.8 L277.5 420.7 L282.5 417.9 L287.5 415.4 L292.5 412.5 L297.5 409.5 L302.5 406.3 L307.5 402.6 L312.5 400.2 L317.5 398.5 L322.5 397.5 L327.5 397.6 L332.5 397.7 L337.5 398.8 L342.5 400.8 L347.5 404.2 L352.5 407.2 L357.5 408.2 L362.5 407.4 L367.5 404.7 L372.5 400.2 L377.5 392.7 L382.5 388.5 L387.5 386.3 L392.5 385.1 L397.5 384.1 L402.5 382.9 L407.5 381.6 L412.5 380.3 L417.5 378.9 L422.5 376.6 L427.5 374.7 L432.5 372.8 L437.5 370.5 L442.5 369.6 L447.5 369.1 L452.5 369.7 L457.5 370.7 L462.5 371.1 L467.5 371.2 L472.5 371.1 L477.5 370.3 L482.5 369.9 L487.5 368.7 L492.5 367.2 L497.5 365.7 L502.5 365.0 L507.5 364.0 L512.5 364.1 L517.5 366.5 L522.5 370.8 L527.5 377.3 L532.5 381.2 L537.5 383.1 L542.5 384.0 L547.5 385.1 L552.5 386.9 L557.5 388.0 L562.5 388.8 L567.5 389.6 L572.5 391.6 L577.5 392.8 L582.5 394.7 L587.5 396.5 L592.5 397.6 L597.5 397.2 L602.5 396.1 L607.5 395.0 L612.5 393.1 L617.5 391.2 L622.5 389.7 L627.5 388.0 L632.5 385.9 L637.5 384.7 L642.5 383.3 L647.5 381.6 L652.5 379.1 L657.5 377.5 L662.5 376.6 L667.5 375.5 L672.5 374.7 L677.5 374.1 L682.5 373.5 L687.5 371.8 L692.5 369.4 L697.5 365.9 L702.5 361.3 L707.5 355.5 L712.5 350.1 L717.5 342.5 L722.5 334.4 L727.5 326.8 L732.5 319.1 L737.5 311.4 L742.5 302.9 L747.5 295.1 L752.5 287.7 L757.5 280.7 L762.5 275.3 L767.5 269.7 L772.5 263.1 L777.5 256.3 L782.5 250.2 L787.5 243.7 L792.5 238.2 L797.5 232.9 L802.5 228.6 L807.5 225.3 L812.5 222.5 L817.5 218.2 L822.5 212.7 L827.5 206.1 L832.5 196.7 L837.5 187.7 L842.5 179.9 L847.5 174.7 L852.5 170.8 L857.5 166.1 L862.5 161.7 L867.5 161.6 L872.5 162.4 L877.5 163.5 L882.5 164.9 L887.5 166.8 L892.5 169.2 L897.5 170.2 L902.5 170.8 L907.5 171.5 L912.5 171.1 L917.5 171.5 L922.5 172.1" fill="none" stroke="#20b050" stroke-width="1.2" stroke-linejoin="round"/>
<path d="M62.5 420.3 L67.5 422.1 L72.5 423.2 L77.5 424.2 L82.5 425.3 L87.5 427.5 L92.5 429.8 L97.5 431.6 L102.5 433.2 L107.5 435.2 L112.5 437.0 L117.5 438.8 L122.5 440.3 L127.5 441.5 L132.5 443.3 L137.5 444.6 L142.5 445.9 L147.5 447.8 L152.5 449.8 L157.5 452.2 L162.5 453.1 L167.5 454.2 L172.5 454.9 L177.5 454.7 L182.5 454.5 L187.5 452.9 L192.5 450.6 L197.5 446.7 L202.5 442.9 L207.5 441.3 L212.5 439.2 L217.5 436.9 L222.5 434.2 L227.5 432.6 L232.5 429.4 L237.5 426.9 L242.5 424.0 L247.5 419.9 L252.5 415.5 L257.5 411.1 L262.5 408.1 L267.5 406.1 L272.5 404.0 L277.5 402.5 L282.5 400.5 L287.5 399.4 L292.5 398.1 L297.5 399.1 L302.5 399.4 L307.5 395.8 L312.5 393.9 L317.5 392.5 L322.5 392.2 L327.5 392.3 L332.5 393.4 L337.5 395.0 L342.5 397.8 L347.5 401.6 L352.5 405.5 L357.5 409.2 L362.5 409.4 L367.5 406.3 L372.5 400.3 L377.5 390.5 L382.5 385.4 L387.5 383.3 L392.5 383.0 L397.5 381.7 L402.5 380.4 L407.5 379.7 L412.5 378.2 L417.5 376.7 L422.5 372.7 L427.5 368.2 L432.5 363.2 L437.5 356.9 L442.5 351.3 L447.5 346.5 L452.5 343.0 L457.5 339.6 L462.5 339.5 L467.5 342.2 L472.5 348.6 L477.5 358.7 L482.5 365.5 L487.5 368.7 L492.5 370.8 L497.5 374.0 L502.5 378.5 L507.5 382.8 L512.5 385.1 L517.5 387.6 L522.5 391.5 L527.5 394.5 L532.5 397.9 L537.5 402.3 L542.5 404.6 L547.5 405.6 L552.5 406.2 L557.5 405.6 L562.5 404.6 L567.5 404.3 L572.5 403.5 L577.5 402.1 L582.5 400.4 L587.5 398.5 L592.5 397.0 L597.5 393.7 L602.5 389.7 L607.5 386.1 L612.5 383.1 L617.5 379.4 L622.5 376.9 L627.5 374.8 L632.5 372.6 L637.5 371.0 L642.5 369.8 L647.5 368.7 L652.5 366.8 L657.5 367.0 L662.5 366.9 L667.5 366.5 L672.5 366.3 L677.5 366.4 L682.5 366.1 L687.5 365.2 L692.5 362.1 L697.5 358.7 L702.5 354.1 L707.5 346.4 L712.5 340.1 L717.5 331.2 L722.5 320.5 L727.5 310.3 L732.5 300.2 L737.5 288.6 L742.5 276.4 L747.5 264.0 L752.5 252.6 L757.5 240.9 L762.5 231.0 L767.5 220.6 L772.5 209.4 L777.5 198.0 L782.5 187.7 L787.5 178.9 L792.5 173.1 L797.5 169.3 L802.5 167.7 L807.5 171.7 L812.5 175.4 L817.5 179.9 L822.5 183.7 L827.5 185.3 L832.5 182.5 L837.5 179.7 L842.5 177.6 L847.5 178.1 L852.5 178.7 L857.5 174.5 L862.5 169.7 L867.5 169.1 L872.5 169.4 L877.5 171.1 L882.5 172.3 L887.5 173.2 L892.5 172.8 L897.5 170.0 L902.5 165.9 L907.5 160.2 L912.5 154.0 L917.5 150.6 L922.5 148.6" fill="none" stroke="#d840c0" stroke-width="1.2" stroke-linejoin="round"/>
<path d="M62.5 433.2 L67.5 432.2 L72.5 431.3 L77.5 430.7 L82.5 430.1 L87.5 431.1 L92.5 432.0 L97.5 432.6 L102.5 434.0 L107.5 437.9 L112.5 440.8 L117.5 445.3 L122.5 449.4 L127.5 452.4 L132.5 456.5 L137.5 458.2 L142.5 459.8 L147.5 463.1 L152.5 465.6 L157.5 466.5 L162.5 465.5 L167.5 463.1 L172.5 460.3 L177.5 457.1 L182.5 452.6 L187.5 447.5 L192.5 441.3 L197.5 430.3 L202.5 420.2 L207.5 416.1 L212.5 412.9 L217.5 410.6 L222.5 408.0 L227.5 408.1 L232.5 406.3 L237.5 406.4 L242.5 406.8 L247.5 409.4 L252.5 410.8 L257.5 406.0 L262.5 403.3 L267.5 401.6 L272.5 400.0 L277.5 397.0 L282.5 394.7 L287.5 392.4 L292.5 389.4 L297.5 388.9 L302.5 388.0 L307.5 385.6 L312.5 384.5 L317.5 383.4 L322.5 384.4 L327.5 387.6 L332.5 392.1 L337.5 397.7 L342.5 406.2 L347.5 414.3 L352.5 423.0 L357.5 432.9 L362.5 434.4 L367.5 429.1 L372.5 416.1 L377.5 393.5 L382.5 378.8 L387.5 368.9 L392.5 359.9 L397.5 349.2 L402.5 337.9 L407.5 326.5 L412.5 322.1 L417.5 324.2 L422.5 329.4 L427.5 343.0 L432.5 347.6 L437.5 344.9 L442.5 342.8 L447.5 343.9 L452.5 348.1 L457.5 352.6 L462.5 357.0 L467.5 360.2 L472.5 367.9 L477.5 374.4 L482.5 383.4 L487.5 392.5 L492.5 398.9 L497.5 404.1 L502.5 408.9 L507.5 412.9 L512.5 413.2 L517.5 415.0 L522.5 415.2 L527.5 414.5 L532.5 412.4 L537.5 412.1 L542.5 410.3 L547.5 407.2 L552.5 403.5 L557.5 398.4 L562.5 396.1 L567.5 393.5 L572.5 391.7 L577.5 389.6 L582.5 388.3 L587.5 384.9 L592.5 383.8 L597.5 380.2 L602.5 375.9 L607.5 373.8 L612.5 370.1 L617.5 365.2 L622.5 362.2 L627.5 360.0 L632.5 356.9 L637.5 357.2 L642.5 355.9 L647.5 357.3 L652.5 357.8 L657.5 360.3 L662.5 363.8 L667.5 367.7 L672.5 370.4 L677.5 372.8 L682.5 375.2 L687.5 373.3 L692.5 368.4 L697.5 360.2 L702.5 350.4 L707.5 332.5 L712.5 316.5 L717.5 294.7 L722.5 270.6 L727.5 247.7 L732.5 225.3 L737.5 203.8 L742.5 184.3 L747.5 167.9 L752.5 154.9 L757.5 149.3 L762.5 145.6 L767.5 146.6 L772.5 148.3 L777.5 148.3 L782.5 150.1 L787.5 153.9 L792.5 161.8 L797.5 170.7 L802.5 180.6 L807.5 194.2 L812.5 205.3 L817.5 213.3 L822.5 219.2 L827.5 222.2 L832.5 214.9 L837.5 205.4 L842.5 193.4 L847.5 185.4 L852.5 176.8 L857.5 154.9 L862.5 134.2 L867.5 124.8 L872.5 119.7 L877.5 120.0 L882.5 129.7 L887.5 141.0 L892.5 152.2 L897.5 154.6 L902.5 155.0 L907.5 165.5 L912.5 173.8 L917.5 176.4 L922.5 177.5" fill="none" stroke="#f0c000" stroke-width="1.2" stroke-linejoin="round"/>
<path d="M62.5 431.0 L67.5 428.0 L72.5 425.9 L77.5 426.3 L82.5 428.5 L87.5 431.2 L92.5 436.1 L97.5 439.3 L102.5 441.6 L107.5 447.3 L112.5 450.4 L117.5 454.5 L122.5 459.5 L127.5 463.1 L132.5 465.6 L137.5 466.0 L142.5 465.1 L147.5 466.6 L152.5 468.2 L157.5 467.4 L162.5 465.0 L167.5 461.1 L172.5 454.0 L177.5 446.0 L182.5 437.8 L187.5 430.0 L192.5 421.4 L197.5 406.6 L202.5 394.3 L207.5 394.4 L212.5 395.7 L217.5 399.7 L222.5 409.3 L227.5 421.9 L232.5 418.1 L237.5 417.0 L242.5 413.8 L247.5 409.4 L252.5 399.7 L257.5 393.9 L262.5 389.6 L267.5 389.3 L272.5 390.5 L277.5 394.3 L282.5 395.5 L287.5 395.1 L292.5 389.5 L297.5 387.3 L302.5 381.6 L307.5 375.6 L312.5 373.9 L317.5 377.2 L322.5 381.6 L327.5 393.6 L332.5 408.6 L337.5 421.5 L342.5 435.2 L347.5 447.0 L352.5 452.3 L357.5 457.2 L362.5 447.2 L367.5 423.1 L372.5 385.2 L377.5 334.6 L382.5 300.3 L387.5 290.6 L392.5 296.6 L397.5 313.1 L402.5 341.2 L407.5 352.6 L412.5 353.6 L417.5 351.9 L422.5 345.6 L427.5 344.7 L432.5 342.7 L437.5 336.2 L442.5 333.7 L447.5 342.1 L452.5 351.5 L457.5 362.6 L462.5 377.8 L467.5 386.8 L472.5 393.6 L477.5 397.2 L482.5 404.2 L487.5 407.1 L492.5 410.9 L497.5 414.5 L502.5 420.6 L507.5 421.6 L512.5 419.3 L517.5 419.1 L522.5 415.9 L527.5 408.4 L532.5 403.3 L537.5 404.8 L542.5 401.5 L547.5 398.5 L552.5 398.5 L557.5 393.4 L562.5 387.3 L567.5 385.5 L572.5 384.8 L577.5 380.7 L582.5 383.2 L587.5 382.4 L592.5 382.0 L597.5 375.5 L602.5 371.1 L607.5 364.4 L612.5 357.8 L617.5 348.4 L622.5 348.8 L627.5 348.8 L632.5 349.4 L637.5 356.6 L642.5 363.4 L647.5 365.8 L652.5 366.7 L657.5 371.1 L662.5 370.9 L667.5 372.0 L672.5 375.0 L677.5 379.0 L682.5 379.3 L687.5 375.7 L692.5 364.8 L697.5 345.4 L702.5 321.8 L707.5 285.8 L712.5 257.4 L717.5 224.6 L722.5 195.9 L727.5 173.6 L732.5 164.8 L737.5 150.2 L742.5 144.0 L747.5 140.0 L752.5 136.2 L757.5 133.9 L762.5 140.9 L767.5 149.1 L772.5 156.6 L777.5 160.4 L782.5 166.3 L787.5 167.0 L792.5 174.5 L797.5 184.8 L802.5 200.7 L807.5 222.0 L812.5 243.6 L817.5 252.2 L822.5 253.5 L827.5 243.7 L832.5 207.7 L837.5 167.1 L842.5 134.7 L847.5 117.3 L852.5 109.9 L857.5 102.1 L862.5 101.2 L867.5 114.9 L872.5 122.2 L877.5 130.1 L882.5 157.2 L887.5 180.9 L892.5 189.5 L897.5 187.1 L902.5 179.9 L907.5 173.7 L912.5 166.8 L917.5 163.4 L922.5 167.8" fill="none" stroke="#e8e8e8" stroke-width="1.2" stroke-linejoin="round"/>

<rect x="241.5" y="418" width="2" height="2" fill="#1d7038"/>
<rect x="241.5" y="424" width="2" height="2" fill="#1d7038"/>
<rect x="241.5" y="430" width="2" height="2" fill="#1d7038"/>
<rect x="241.5" y="436" width="2" height="2" fill="#1d7038"/>
<rect x="241.5" y="442" width="2" height="2" fill="#1d7038"/>
<rect x="241.5" y="448" width="2" height="2" fill="#1d7038"/>
<circle cx="242.5" cy="415.4" r="2.5" fill="#22a04a"/>
<rect x="236.5" y="430" width="2" height="2" fill="#8c3232"/>
<rect x="236.5" y="436" width="2" height="2" fill="#8c3232"/>
<rect x="236.5" y="442" width="2" height="2" fill="#8c3232"/>
<rect x="236.5" y="448" width="2" height="2" fill="#8c3232"/>
<rect x="236.5" y="454" width="2" height="2" fill="#8c3232"/>
<rect x="236.5" y="460" width="2" height="2" fill="#8c3232"/>
<circle cx="237.5" cy="427.5" r="2.5" fill="#e04040"/>
<rect x="271.5" y="345" width="2" height="2" fill="#1d7038"/>
<rect x="271.5" y="351" width="2" height="2" fill="#1d7038"/>
<rect x="271.5" y="357" width="2" height="2" fill="#1d7038"/>
<rect x="271.5" y="363" width="2" height="2" fill="#1d7038"/>
<rect x="271.5" y="369" width="2" height="2" fill="#1d7038"/>
<rect x="271.5" y="375" width="2" height="2" fill="#1d7038"/>
<rect x="271.5" y="381" width="2" height="2" fill="#1d7038"/>
<circle cx="272.5" cy="384" r="2.5" fill="#22a04a"/>
<rect x="266.5" y="413" width="2" height="2" fill="#8c3232"/>
<rect x="266.5" y="419" width="2" height="2" fill="#8c3232"/>
<rect x="266.5" y="425" width="2" height="2" fill="#8c3232"/>
<rect x="266.5" y="431" width="2" height="2" fill="#8c3232"/>
<rect x="266.5" y="437" width="2" height="2" fill="#8c3232"/>
<rect x="266.5" y="443" width="2" height="2" fill="#8c3232"/>
<circle cx="267.5" cy="410.4" r="2.5" fill="#e04040"/>
<rect x="296.5" y="400" width="2" height="2" fill="#1d7038"/>
<rect x="296.5" y="406" width="2" height="2" fill="#1d7038"/>
<rect x="296.5" y="412" width="2" height="2" fill="#1d7038"/>
<rect x="296.5" y="418" width="2" height="2" fill="#1d7038"/>
<rect x="296.5" y="424" width="2" height="2" fill="#1d7038"/>
<rect x="296.5" y="430" width="2" height="2" fill="#1d7038"/>
<circle cx="297.5" cy="396.6" r="2.5" fill="#22a04a"/>
<rect x="291.5" y="424" width="2" height="2" fill="#8c3232"/>
<rect x="291.5" y="430" width="2" height="2" fill="#8c3232"/>
<rect x="291.5" y="436" width="2" height="2" fill="#8c3232"/>
<rect x="291.5" y="442" width="2" height="2" fill="#8c3232"/>
<rect x="291.5" y="448" width="2" height="2" fill="#8c3232"/>
<rect x="291.5" y="454" width="2" height="2" fill="#8c3232"/>
<circle cx="292.5" cy="421" r="2.5" fill="#e04040"/>
<rect x="331.5" y="444" width="2" height="2" fill="#1d7038"/>
<rect x="331.5" y="450" width="2" height="2" fill="#1d7038"/>
<rect x="331.5" y="456" width="2" height="2" fill="#1d7038"/>
<rect x="331.5" y="462" width="2" height="2" fill="#1d7038"/>
<rect x="331.5" y="468" width="2" height="2" fill="#1d7038"/>
<rect x="331.5" y="474" width="2" height="2" fill="#1d7038"/>
<circle cx="332.5" cy="441.5" r="2.5" fill="#22a04a"/>
<rect x="326.5" y="366" width="2" height="2" fill="#8c3232"/>
<rect x="326.5" y="372" width="2" height="2" fill="#8c3232"/>
<rect x="326.5" y="378" width="2" height="2" fill="#8c3232"/>
<rect x="326.5" y="384" width="2" height="2" fill="#8c3232"/>
<rect x="326.5" y="390" width="2" height="2" fill="#8c3232"/>
<rect x="326.5" y="396" width="2" height="2" fill="#8c3232"/>
<rect x="326.5" y="402" width="2" height="2" fill="#8c3232"/>
<circle cx="327.5" cy="404.8" r="2.5" fill="#e04040"/>
<rect x="336.5" y="394" width="2" height="2" fill="#8c3232"/>
<rect x="336.5" y="400" width="2" height="2" fill="#8c3232"/>
<rect x="336.5" y="406" width="2" height="2" fill="#8c3232"/>
<rect x="336.5" y="412" width="2" height="2" fill="#8c3232"/>
<rect x="336.5" y="418" width="2" height="2" fill="#8c3232"/>
<rect x="336.5" y="424" width="2" height="2" fill="#8c3232"/>
<rect x="336.5" y="430" width="2" height="2" fill="#8c3232"/>
<circle cx="337.5" cy="433.4" r="2.5" fill="#e04040"/>
<rect x="341.5" y="402" width="2" height="2" fill="#85561e"/>
<rect x="341.5" y="408" width="2" height="2" fill="#85561e"/>
<rect x="341.5" y="414" width="2" height="2" fill="#85561e"/>
<rect x="341.5" y="420" width="2" height="2" fill="#85561e"/>
<rect x="341.5" y="426" width="2" height="2" fill="#85561e"/>
<rect x="341.5" y="432" width="2" height="2" fill="#85561e"/>
<rect x="341.5" y="438" width="2" height="2" fill="#85561e"/>
<circle cx="342.5" cy="443.3" r="2.5" fill="#c8862e"/>
<rect x="346.5" y="415" width="2" height="2" fill="#85561e"/>
<rect x="346.5" y="421" width="2" height="2" fill="#85561e"/>
<rect x="346.5" y="427" width="2" height="2" fill="#85561e"/>
<rect x="346.5" y="433" width="2" height="2" fill="#85561e"/>
<rect x="346.5" y="439" width="2" height="2" fill="#85561e"/>
<rect x="346.5" y="445" width="2" height="2" fill="#85561e"/>
<rect x="346.5" y="451" width="2" height="2" fill="#85561e"/>
<circle cx="347.5" cy="456.3" r="2.5" fill="#c8862e"/>
<rect x="351.5" y="412" width="2" height="2" fill="#1d7038"/>
<rect x="351.5" y="418" width="2" height="2" fill="#1d7038"/>
<rect x="351.5" y="424" width="2" height="2" fill="#1d7038"/>
<rect x="351.5" y="430" width="2" height="2" fill="#1d7038"/>
<rect x="351.5" y="436" width="2" height="2" fill="#1d7038"/>
<rect x="351.5" y="442" width="2" height="2" fill="#1d7038"/>
<rect x="351.5" y="448" width="2" height="2" fill="#1d7038"/>
<circle cx="352.5" cy="454.4" r="2.5" fill="#22a04a"/>
<rect x="451.5" y="328" width="2" height="2" fill="#8c3232"/>
<rect x="451.5" y="334" width="2" height="2" fill="#8c3232"/>
<rect x="451.5" y="340" width="2" height="2" fill="#8c3232"/>
<rect x="451.5" y="346" width="2" height="2" fill="#8c3232"/>
<rect x="451.5" y="352" width="2" height="2" fill="#8c3232"/>
<rect x="451.5" y="358" width="2" height="2" fill="#8c3232"/>
<rect x="451.5" y="364" width="2" height="2" fill="#8c3232"/>
<circle cx="452.5" cy="367" r="2.5" fill="#e04040"/>
<rect x="481.5" y="368" width="2" height="2" fill="#8c3232"/>
<rect x="481.5" y="374" width="2" height="2" fill="#8c3232"/>
<rect x="481.5" y="380" width="2" height="2" fill="#8c3232"/>
<rect x="481.5" y="386" width="2" height="2" fill="#8c3232"/>
<rect x="481.5" y="392" width="2" height="2" fill="#8c3232"/>
<rect x="481.5" y="398" width="2" height="2" fill="#8c3232"/>
<rect x="481.5" y="404" width="2" height="2" fill="#8c3232"/>
<circle cx="482.5" cy="407.3" r="2.5" fill="#e04040"/>
<rect x="491.5" y="368" width="2" height="2" fill="#85561e"/>
<rect x="491.5" y="374" width="2" height="2" fill="#85561e"/>
<rect x="491.5" y="380" width="2" height="2" fill="#85561e"/>
<rect x="491.5" y="386" width="2" height="2" fill="#85561e"/>
<rect x="491.5" y="392" width="2" height="2" fill="#85561e"/>
<rect x="491.5" y="398" width="2" height="2" fill="#85561e"/>
<rect x="491.5" y="404" width="2" height="2" fill="#85561e"/>
<circle cx="492.5" cy="407.3" r="2.5" fill="#c8862e"/>
<rect x="506.5" y="373" width="2" height="2" fill="#1d7038"/>
<rect x="506.5" y="379" width="2" height="2" fill="#1d7038"/>
<rect x="506.5" y="385" width="2" height="2" fill="#1d7038"/>
<rect x="506.5" y="391" width="2" height="2" fill="#1d7038"/>
<rect x="506.5" y="397" width="2" height="2" fill="#1d7038"/>
<rect x="506.5" y="403" width="2" height="2" fill="#1d7038"/>
<rect x="506.5" y="409" width="2" height="2" fill="#1d7038"/>
<circle cx="507.5" cy="412.4" r="2.5" fill="#22a04a"/>
<rect x="501.5" y="383" width="2" height="2" fill="#8c3232"/>
<rect x="501.5" y="389" width="2" height="2" fill="#8c3232"/>
<rect x="501.5" y="395" width="2" height="2" fill="#8c3232"/>
<rect x="501.5" y="401" width="2" height="2" fill="#8c3232"/>
<rect x="501.5" y="407" width="2" height="2" fill="#8c3232"/>
<rect x="501.5" y="413" width="2" height="2" fill="#8c3232"/>
<rect x="501.5" y="419" width="2" height="2" fill="#8c3232"/>
<circle cx="502.5" cy="422.4" r="2.5" fill="#e04040"/>
<rect x="456.5" y="397" width="2" height="2" fill="#85561e"/>
<rect x="456.5" y="403" width="2" height="2" fill="#85561e"/>
<rect x="456.5" y="409" width="2" height="2" fill="#85561e"/>
<rect x="456.5" y="415" width="2" height="2" fill="#85561e"/>
<rect x="456.5" y="421" width="2" height="2" fill="#85561e"/>
<rect x="456.5" y="427" width="2" height="2" fill="#85561e"/>
<circle cx="457.5" cy="394.3" r="2.5" fill="#c8862e"/>
<rect x="461.5" y="413" width="2" height="2" fill="#8c3232"/>
<rect x="461.5" y="419" width="2" height="2" fill="#8c3232"/>
<rect x="461.5" y="425" width="2" height="2" fill="#8c3232"/>
<rect x="461.5" y="431" width="2" height="2" fill="#8c3232"/>
<rect x="461.5" y="437" width="2" height="2" fill="#8c3232"/>
<rect x="461.5" y="443" width="2" height="2" fill="#8c3232"/>
<circle cx="462.5" cy="410" r="2.5" fill="#e04040"/>
<rect x="466.5" y="412" width="2" height="2" fill="#85561e"/>
<rect x="466.5" y="418" width="2" height="2" fill="#85561e"/>
<rect x="466.5" y="424" width="2" height="2" fill="#85561e"/>
<rect x="466.5" y="430" width="2" height="2" fill="#85561e"/>
<rect x="466.5" y="436" width="2" height="2" fill="#85561e"/>
<rect x="466.5" y="442" width="2" height="2" fill="#85561e"/>
<circle cx="467.5" cy="408.6" r="2.5" fill="#c8862e"/>
<rect x="471.5" y="412" width="2" height="2" fill="#85561e"/>
<rect x="471.5" y="418" width="2" height="2" fill="#85561e"/>
<rect x="471.5" y="424" width="2" height="2" fill="#85561e"/>
<rect x="471.5" y="430" width="2" height="2" fill="#85561e"/>
<rect x="471.5" y="436" width="2" height="2" fill="#85561e"/>
<rect x="471.5" y="442" width="2" height="2" fill="#85561e"/>
<circle cx="472.5" cy="409.2" r="2.5" fill="#c8862e"/>
<rect x="476.5" y="420" width="2" height="2" fill="#85561e"/>
<rect x="476.5" y="426" width="2" height="2" fill="#85561e"/>
<rect x="476.5" y="432" width="2" height="2" fill="#85561e"/>
<rect x="476.5" y="438" width="2" height="2" fill="#85561e"/>
<rect x="476.5" y="444" width="2" height="2" fill="#85561e"/>
<rect x="476.5" y="450" width="2" height="2" fill="#85561e"/>
<circle cx="477.5" cy="417.2" r="2.5" fill="#c8862e"/>
<rect x="486.5" y="422" width="2" height="2" fill="#1d7038"/>
<rect x="486.5" y="428" width="2" height="2" fill="#1d7038"/>
<rect x="486.5" y="434" width="2" height="2" fill="#1d7038"/>
<rect x="486.5" y="440" width="2" height="2" fill="#1d7038"/>
<rect x="486.5" y="446" width="2" height="2" fill="#1d7038"/>
<rect x="486.5" y="452" width="2" height="2" fill="#1d7038"/>
<circle cx="487.5" cy="419.5" r="2.5" fill="#22a04a"/>
<rect x="496.5" y="428" width="2" height="2" fill="#8c3232"/>
<rect x="496.5" y="434" width="2" height="2" fill="#8c3232"/>
<rect x="496.5" y="440" width="2" height="2" fill="#8c3232"/>
<rect x="496.5" y="446" width="2" height="2" fill="#8c3232"/>
<rect x="496.5" y="452" width="2" height="2" fill="#8c3232"/>
<rect x="496.5" y="458" width="2" height="2" fill="#8c3232"/>
<circle cx="497.5" cy="425.4" r="2.5" fill="#e04040"/>
<rect x="566.5" y="346" width="2" height="2" fill="#85561e"/>
<rect x="566.5" y="352" width="2" height="2" fill="#85561e"/>
<rect x="566.5" y="358" width="2" height="2" fill="#85561e"/>
<rect x="566.5" y="364" width="2" height="2" fill="#85561e"/>
<rect x="566.5" y="370" width="2" height="2" fill="#85561e"/>
<rect x="566.5" y="376" width="2" height="2" fill="#85561e"/>
<rect x="566.5" y="382" width="2" height="2" fill="#85561e"/>
<circle cx="567.5" cy="384" r="2.5" fill="#c8862e"/>
<rect x="561.5" y="388" width="2" height="2" fill="#85561e"/>
<rect x="561.5" y="394" width="2" height="2" fill="#85561e"/>
<rect x="561.5" y="400" width="2" height="2" fill="#85561e"/>
<rect x="561.5" y="406" width="2" height="2" fill="#85561e"/>
<rect x="561.5" y="412" width="2" height="2" fill="#85561e"/>
<rect x="561.5" y="418" width="2" height="2" fill="#85561e"/>
<circle cx="562.5" cy="385.5" r="2.5" fill="#c8862e"/>
<rect x="556.5" y="398" width="2" height="2" fill="#8c3232"/>
<rect x="556.5" y="404" width="2" height="2" fill="#8c3232"/>
<rect x="556.5" y="410" width="2" height="2" fill="#8c3232"/>
<rect x="556.5" y="416" width="2" height="2" fill="#8c3232"/>
<rect x="556.5" y="422" width="2" height="2" fill="#8c3232"/>
<rect x="556.5" y="428" width="2" height="2" fill="#8c3232"/>
<circle cx="557.5" cy="395.4" r="2.5" fill="#e04040"/>
<rect x="571.5" y="403" width="2" height="2" fill="#85561e"/>
<rect x="571.5" y="409" width="2" height="2" fill="#85561e"/>
<rect x="571.5" y="415" width="2" height="2" fill="#85561e"/>
<rect x="571.5" y="421" width="2" height="2" fill="#85561e"/>
<rect x="571.5" y="427" width="2" height="2" fill="#85561e"/>
<rect x="571.5" y="433" width="2" height="2" fill="#85561e"/>
<circle cx="572.5" cy="400" r="2.5" fill="#c8862e"/>
<rect x="576.5" y="394" width="2" height="2" fill="#1d7038"/>
<rect x="576.5" y="400" width="2" height="2" fill="#1d7038"/>
<rect x="576.5" y="406" width="2" height="2" fill="#1d7038"/>
<rect x="576.5" y="412" width="2" height="2" fill="#1d7038"/>
<rect x="576.5" y="418" width="2" height="2" fill="#1d7038"/>
<rect x="576.5" y="424" width="2" height="2" fill="#1d7038"/>
<circle cx="577.5" cy="391.2" r="2.5" fill="#22a04a"/>
<rect x="901.5" y="175" width="2" height="2" fill="#1d7038"/>
<rect x="901.5" y="181" width="2" height="2" fill="#1d7038"/>
<rect x="901.5" y="187" width="2" height="2" fill="#1d7038"/>
<rect x="901.5" y="193" width="2" height="2" fill="#1d7038"/>
<rect x="901.5" y="199" width="2" height="2" fill="#1d7038"/>
<rect x="901.5" y="205" width="2" height="2" fill="#1d7038"/>
<circle cx="902.5" cy="172" r="2.5" fill="#22a04a"/>
<rect x="896.5" y="185" width="2" height="2" fill="#8c3232"/>
<rect x="896.5" y="191" width="2" height="2" fill="#8c3232"/>
<rect x="896.5" y="197" width="2" height="2" fill="#8c3232"/>
<rect x="896.5" y="203" width="2" height="2" fill="#8c3232"/>
<rect x="896.5" y="209" width="2" height="2" fill="#8c3232"/>
<rect x="896.5" y="215" width="2" height="2" fill="#8c3232"/>
<circle cx="897.5" cy="182" r="2.5" fill="#e04040"/>
<rect x="231" y="467" width="12" height="12" rx="2" fill="#9a3434" fill-opacity="0.92"/>
<text x="237" y="477" text-anchor="middle" font-size="11" fill="#e6e6e6" font-family="Liberation Sans">B</text>
<rect x="236" y="454.7" width="12" height="12" rx="2" fill="#1f7a3c" fill-opacity="0.92"/>
<text x="242" y="464.7" text-anchor="middle" font-size="11" fill="#e6e6e6" font-family="Liberation Sans">S</text>
<rect x="261" y="450" width="12" height="12" rx="2" fill="#9a3434" fill-opacity="0.92"/>
<text x="267" y="460" text-anchor="middle" font-size="11" fill="#e6e6e6" font-family="Liberation Sans">B</text>
<rect x="266" y="330" width="12" height="12" rx="2" fill="#1f7a3c" fill-opacity="0.92"/>
<text x="272" y="340" text-anchor="middle" font-size="11" fill="#e6e6e6" font-family="Liberation Sans">S</text>
<rect x="286" y="461" width="12" height="12" rx="2" fill="#9a3434" fill-opacity="0.92"/>
<text x="292" y="471" text-anchor="middle" font-size="11" fill="#e6e6e6" font-family="Liberation Sans">B</text>
<rect x="291" y="436" width="12" height="12" rx="2" fill="#1f7a3c" fill-opacity="0.92"/>
<text x="297" y="446" text-anchor="middle" font-size="11" fill="#e6e6e6" font-family="Liberation Sans">S</text>
<rect x="321" y="351" width="12" height="12" rx="2" fill="#9a3434" fill-opacity="0.92"/>
<text x="327" y="361" text-anchor="middle" font-size="11" fill="#e6e6e6" font-family="Liberation Sans">B</text>
<rect x="326" y="481" width="12" height="12" rx="2" fill="#1f7a3c" fill-opacity="0.92"/>
<text x="332" y="491" text-anchor="middle" font-size="11" fill="#e6e6e6" font-family="Liberation Sans">S</text>
<rect x="331" y="379" width="12" height="12" rx="2" fill="#9a3434" fill-opacity="0.92"/>
<text x="337" y="389" text-anchor="middle" font-size="11" fill="#e6e6e6" font-family="Liberation Sans">B</text>
<rect x="336" y="386.7" width="12" height="12" rx="2" fill="#80531e" fill-opacity="0.92"/>
<text x="342" y="396.7" text-anchor="middle" font-size="11" fill="#e6e6e6" font-family="Liberation Sans">T</text>
<rect x="341" y="400" width="12" height="12" rx="2" fill="#80531e" fill-opacity="0.92"/>
<text x="347" y="410" text-anchor="middle" font-size="11" fill="#e6e6e6" font-family="Liberation Sans">T</text>
<rect x="346" y="397.4" width="12" height="12" rx="2" fill="#1f7a3c" fill-opacity="0.92"/>
<text x="352" y="407.4" text-anchor="middle" font-size="11" fill="#e6e6e6" font-family="Liberation Sans">S</text>
<rect x="446" y="313" width="12" height="12" rx="2" fill="#9a3434" fill-opacity="0.92"/>
<text x="452" y="323" text-anchor="middle" font-size="11" fill="#e6e6e6" font-family="Liberation Sans">B</text>
<rect x="451" y="434" width="12" height="12" rx="2" fill="#80531e" fill-opacity="0.92"/>
<text x="457" y="444" text-anchor="middle" font-size="11" fill="#e6e6e6" font-family="Liberation Sans">T</text>
<rect x="455.7" y="450" width="12" height="12" rx="2" fill="#9a3434" fill-opacity="0.92"/>
<text x="461.7" y="460" text-anchor="middle" font-size="11" fill="#e6e6e6" font-family="Liberation Sans">B</text>
<rect x="460.8" y="448" width="12" height="12" rx="2" fill="#80531e" fill-opacity="0.92"/>
<text x="466.8" y="458" text-anchor="middle" font-size="11" fill="#e6e6e6" font-family="Liberation Sans">T</text>
<rect x="465.3" y="448" width="12" height="12" rx="2" fill="#80531e" fill-opacity="0.92"/>
<text x="471.3" y="458" text-anchor="middle" font-size="11" fill="#e6e6e6" font-family="Liberation Sans">T</text>
<rect x="470.8" y="457" width="12" height="12" rx="2" fill="#80531e" fill-opacity="0.92"/>
<text x="476.8" y="467" text-anchor="middle" font-size="11" fill="#e6e6e6" font-family="Liberation Sans">T</text>
<rect x="475.2" y="353.2" width="12" height="12" rx="2" fill="#9a3434" fill-opacity="0.92"/>
<text x="481.2" y="363.2" text-anchor="middle" font-size="11" fill="#e6e6e6" font-family="Liberation Sans">B</text>
<rect x="481" y="459" width="12" height="12" rx="2" fill="#1f7a3c" fill-opacity="0.92"/>
<text x="487" y="469" text-anchor="middle" font-size="11" fill="#e6e6e6" font-family="Liberation Sans">S</text>
<rect x="486" y="353.2" width="12" height="12" rx="2" fill="#80531e" fill-opacity="0.92"/>
<text x="492" y="363.2" text-anchor="middle" font-size="11" fill="#e6e6e6" font-family="Liberation Sans">T</text>
<rect x="491" y="465" width="12" height="12" rx="2" fill="#9a3434" fill-opacity="0.92"/>
<text x="497" y="475" text-anchor="middle" font-size="11" fill="#e6e6e6" font-family="Liberation Sans">B</text>
<rect x="495.7" y="368.2" width="12" height="12" rx="2" fill="#9a3434" fill-opacity="0.92"/>
<text x="501.7" y="378.2" text-anchor="middle" font-size="11" fill="#e6e6e6" font-family="Liberation Sans">B</text>
<rect x="501" y="358" width="12" height="12" rx="2" fill="#1f7a3c" fill-opacity="0.92"/>
<text x="507" y="368" text-anchor="middle" font-size="11" fill="#e6e6e6" font-family="Liberation Sans">S</text>
<rect x="551" y="435" width="12" height="12" rx="2" fill="#9a3434" fill-opacity="0.92"/>
<text x="557" y="445" text-anchor="middle" font-size="11" fill="#e6e6e6" font-family="Liberation Sans">B</text>
<rect x="556" y="425" width="12" height="12" rx="2" fill="#80531e" fill-opacity="0.92"/>
<text x="562" y="435" text-anchor="middle" font-size="11" fill="#e6e6e6" font-family="Liberation Sans">T</text>
<rect x="561" y="330.5" width="12" height="12" rx="2" fill="#80531e" fill-opacity="0.92"/>
<text x="567" y="340.5" text-anchor="middle" font-size="11" fill="#e6e6e6" font-family="Liberation Sans">T</text>
<rect x="566" y="439.7" width="12" height="12" rx="2" fill="#80531e" fill-opacity="0.92"/>
<text x="572" y="449.7" text-anchor="middle" font-size="11" fill="#e6e6e6" font-family="Liberation Sans">T</text>
<rect x="571" y="431" width="12" height="12" rx="2" fill="#1f7a3c" fill-opacity="0.92"/>
<text x="577" y="441" text-anchor="middle" font-size="11" fill="#e6e6e6" font-family="Liberation Sans">S</text>
<rect x="890.5" y="221" width="12" height="12" rx="2" fill="#9a3434" fill-opacity="0.92"/>
<text x="896.5" y="231" text-anchor="middle" font-size="11" fill="#e6e6e6" font-family="Liberation Sans">B</text>
<rect x="896" y="211" width="12" height="12" rx="2" fill="#1f7a3c" fill-opacity="0.92"/>
<text x="902" y="221" text-anchor="middle" font-size="11" fill="#e6e6e6" font-family="Liberation Sans">S</text>
<rect x="867" y="85" width="68" height="32" fill="#36373b"/>
<g stroke="#c8c8c8" stroke-width="1" fill="none">
<path d="M163.5 485.5h10 M163.5 485.5l1.8-1.5 M163.5 485.5l1.8 1.5"/>
<path d="M863.5 39.5h10 M863.5 39.5l1.8-1.5 M863.5 39.5l1.8 1.5"/>
</g>
<rect x="0" y="523" width="935" height="1" fill="#26272b"/>
</svg>
<div class="ax" style="top:65px">26.00</div>
<div class="ax" style="top:136px">24.00</div>
<div class="ax" style="top:207px">22.00</div>
<div class="ax" style="top:278px">20.00</div>
<div class="ax" style="top:349px">18.00</div>
<div class="ax" style="top:419px">16.00</div>
<div class="lbl" style="left:174px;top:480px;font-size:11.5px">14.39</div>
<div class="lbl" style="left:874px;top:34.5px;font-size:11.2px">26.76</div>
<div class="lbl" style="left:867px;top:71px;font-size:12.5px">24.68-25.62</div>
<div class="badge" style="left:820px">财</div>
<div class="badge" style="left:850px">榜</div>
</body></html>
